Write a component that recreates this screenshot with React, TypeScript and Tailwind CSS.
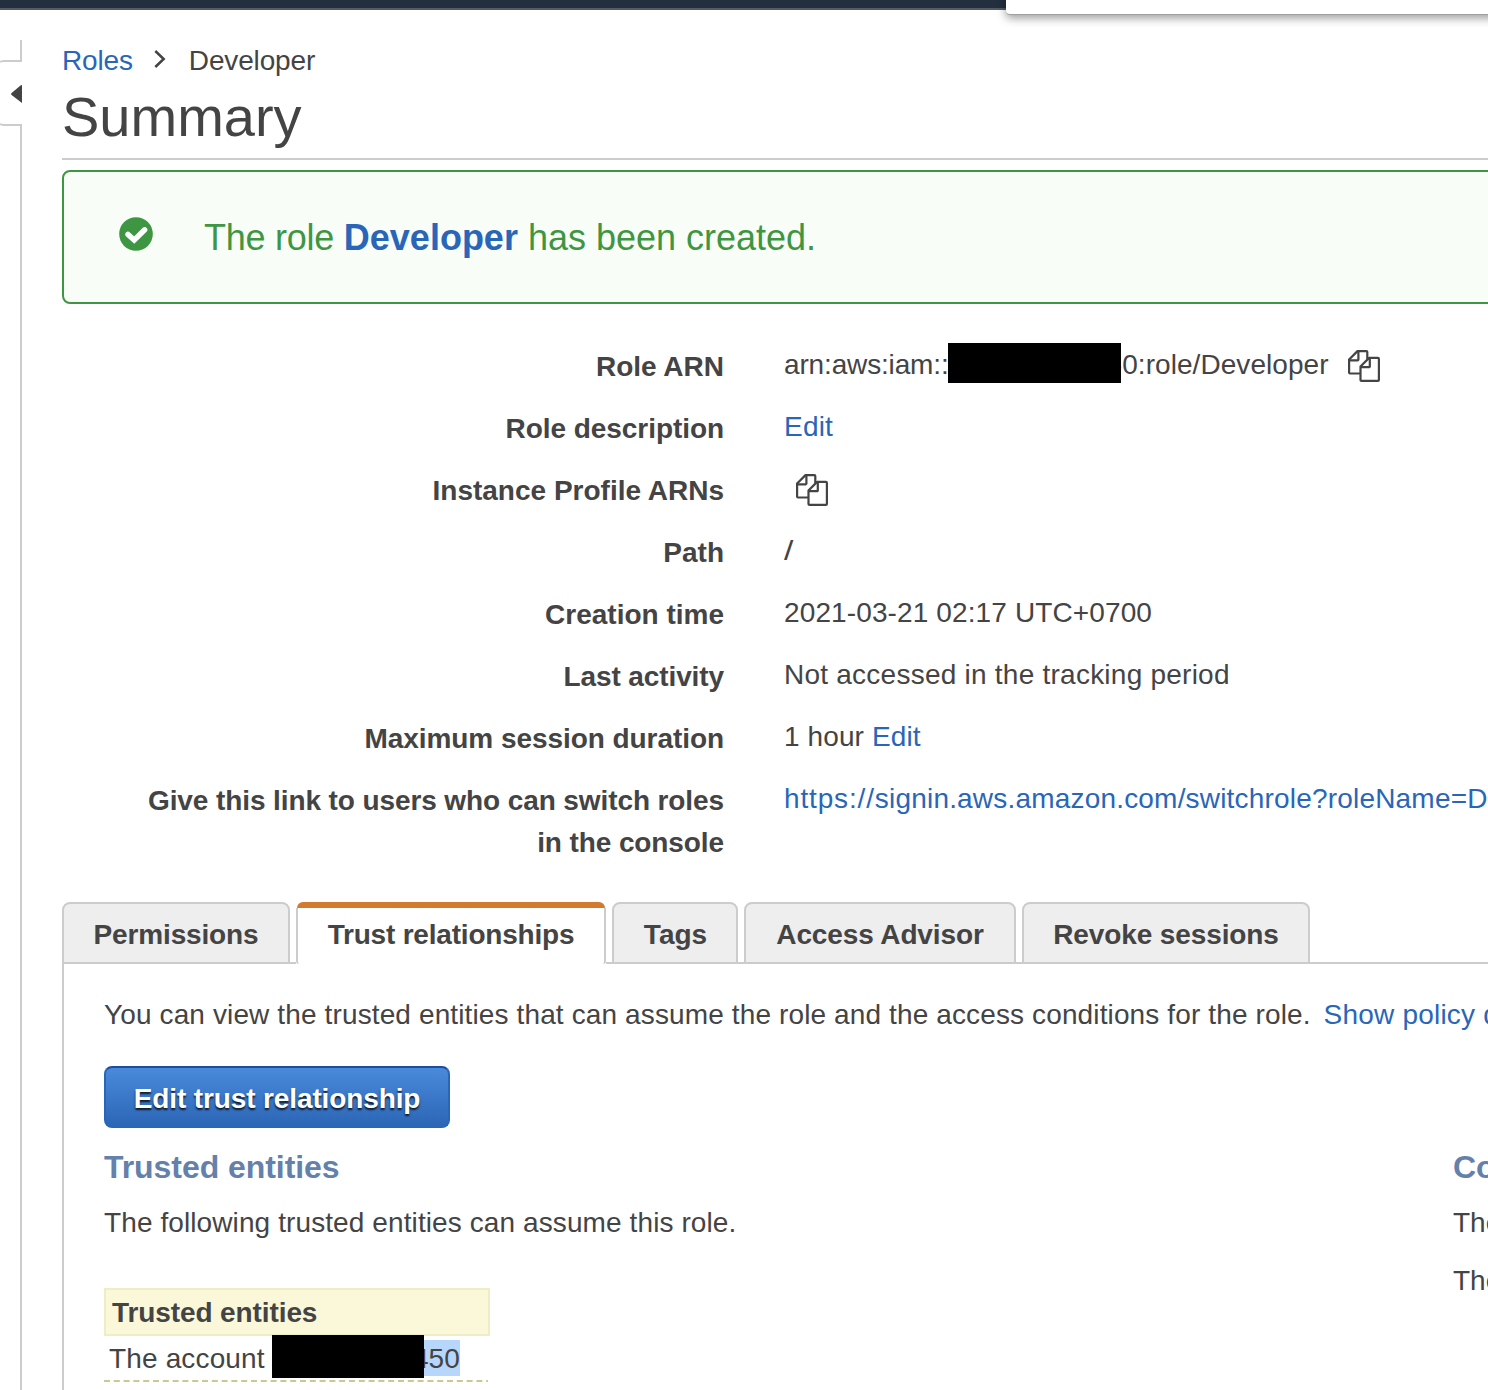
import type { ReactNode } from "react";

function CopyIcon({ className = "" }: { className?: string }) {
  return (
    <svg
      className={`h-8 w-8 shrink-0 ${className}`}
      viewBox="0 0 32 32"
      fill="none"
      stroke="#444"
      strokeWidth="2.2"
      strokeLinejoin="round"
    >
      <path d="M19.3 9V2.1a1 1 0 0 0-1-1H9.5L1.1 9.5v13.1c0 .5.4.9.9.9h10.4" />
      <path d="M10.4 1.1v8.4a.8.8 0 0 1-.8.8H1.1" />
      <path d="M21.1 7.9h8.8c.5 0 1 .4 1 1v21c0 .5-.4 1-1 1H13.5a1 1 0 0 1-1-1V16.5z" />
      <path d="M21.8 7.9v8.5a.8.8 0 0 1-.8.8h-8.5" />
    </svg>
  );
}

function Row({ label, className = "", children }: { label: ReactNode; className?: string; children: ReactNode }) {
  return (
    <div className="flex h-[62px] shrink-0 last:h-[85px]">
      <dt className={`w-[662px] shrink-0 pt-0.5 text-right font-bold ${className}`}>{label}</dt>
      <dd className="ml-[60px] flex h-[42px] items-center">{children}</dd>
    </div>
  );
}

function Tab({ className, children }: { className: string; children: ReactNode }) {
  return (
    <li
      className={`flex h-[62px] shrink-0 items-center justify-center rounded-t-lg border-2 border-[#ccc] bg-[#eee] pt-1 font-bold ${className}`}
    >
      {children}
    </li>
  );
}

export default function App() {
  return (
    <div className="relative flex h-[1390px] w-[1488px] flex-col overflow-hidden bg-white font-['Liberation_Sans',Arial,sans-serif] text-[28px] leading-[42px] whitespace-nowrap text-[#444]">
      <header className="h-[10px] shrink-0 border-b-2 border-[#545b64] bg-[#232f3e]" />
      <div className="absolute top-[-20px] left-[1006px] h-[35px] w-[520px] rounded-[4px] border-b border-[#a0a0a0] bg-white shadow-[0_3px_10px_0_rgba(0,0,0,0.4)]" />

      <div className="flex min-h-0 flex-1">
        <aside className="flex w-[22px] shrink-0 flex-col pt-[30px]">
          <div className="h-5 shrink-0 border-r-2 border-[#ccc]" />
          <div className="-ml-1 flex h-[66px] shrink-0 items-center justify-end rounded-l-lg border-y-2 border-[#ccc] pt-0.5">
            <svg className="h-[18px] w-[11px]" viewBox="0 0 11 18">
              <path d="M11 0v18L.6 10q-1-1 0-2L9.5.6Q10 0 11 0z" fill="#444" />
            </svg>
          </div>
          <div className="flex-1 border-r-2 border-[#ccc]" />
        </aside>

        <main className="ml-10 w-[1500px] shrink-0 pt-[30px]">
          <nav className="flex h-[42px] items-center tracking-[-0.15px]">
            <a className="text-[#2a66b8]">Roles</a>
            <svg className="mt-[-4px] ml-[21px] h-[18px] w-3" viewBox="0 0 12 18" fill="none" stroke="#444" strokeWidth="2.5">
              <path d="M1.3 1l8.4 8-8.4 8" />
            </svg>
            <span className="ml-[23px]">Developer</span>
          </nav>
          <h1 className="h-[78px] border-b-2 border-[#ccc] text-[56px] leading-[69px]">Summary</h1>

          <div className="mt-[10px] flex h-[134px] items-center rounded-lg border-2 border-[#3e9642] bg-[#f9fdf8] text-[36px] text-[#3e9642]">
            <svg className="-mt-1.5 ml-[55px] h-[34px] w-[34px]" viewBox="0 0 34 34">
              <circle cx="17" cy="17" r="16.8" fill="#3e9642" />
              <path
                d="M9 17.4l6.2 5.7L25.7 12.8"
                fill="none"
                stroke="#fff"
                strokeWidth="5.4"
                strokeLinecap="round"
                strokeLinejoin="miter"
              />
            </svg>
            <p className="ml-[51px] pt-0.5">
              <span className="tracking-[-0.25px]">The role </span>
              <b className="text-[#2a66b8]">Developer</b> has been created.
            </p>
          </div>

          <dl className="mt-10">
            <Row label="Role ARN">
              <span className="tracking-[-0.15px]">arn:aws:iam::</span>
              <span className="relative z-10 -mt-px -ml-px h-10 w-[173px] self-start bg-black" />
              <span className="-ml-[14px] tracking-[0.06px]">60:role/Developer</span>
              <CopyIcon className="mt-0.5 ml-[19px]" />
            </Row>
            <Row label="Role description" className="tracking-[-0.06px]">
              <a className="text-[#2a66b8] tracking-[0.2px]">Edit</a>
            </Row>
            <Row label="Instance Profile ARNs">
              <CopyIcon className="mt-0.5 ml-3" />
            </Row>
            <Row label="Path">
              <span className="inline-block origin-left scale-x-120">/</span>
            </Row>
            <Row label="Creation time">
              <span className="tracking-[0.12px]">2021-03-21 02:17 UTC+0700</span>
            </Row>
            <Row label="Last activity" className="tracking-[-0.1px]">
              <span className="tracking-[0.24px]">Not accessed in the tracking period</span>
            </Row>
            <Row label="Maximum session duration" className="tracking-[-0.06px]">
              <span className="tracking-[0.1px]">1 hour</span>
              <a className="ml-2 text-[#2a66b8] tracking-[0.1px]">Edit</a>
            </Row>
            <Row
              className="tracking-[-0.1px]"
              label={
                <>
                  Give this link to users who can switch roles
                  <br />
                  in the console
                </>
              }
            >
              <a className="text-[#2a66b8] tracking-[0.19px]">
                <span className="tracking-[0.85px]">https://</span>signin.aws.amazon.com/switchrole?roleName=Developer
              </a>
            </Row>
          </dl>

          <ul className="relative z-10 mt-[39px] flex gap-1.5">
            <Tab className="w-[228px] tracking-[-0.15px]">Permissions</Tab>
            <li className="flex h-[62px] w-[310px] shrink-0 flex-col rounded-t-lg bg-white font-bold tracking-[-0.2px]">
              <div className="mx-px h-1.5 shrink-0 rounded-t-md bg-[#d27b2e]" />
              <div className="flex flex-1 items-center justify-center rounded-b-[3px] border-x-2 border-[#ccc] bg-white pb-0.5">
                Trust relationships
              </div>
            </li>
            <Tab className="w-[126px] pl-px">Tags</Tab>
            <Tab className="w-[272px] tracking-[-0.12px]">Access Advisor</Tab>
            <Tab className="w-[288px] tracking-[-0.12px]">Revoke sessions</Tab>
          </ul>

          <section className="-mt-0.5 h-[440px] border-2 border-[#ccc] pt-[30px] pl-10">
            <p className="flex tracking-[0.125px]">
              <span>You can view the trusted entities that can assume the role and the access conditions for the role.</span>
              <a className="ml-[13px] tracking-[0.2px] text-[#2a66b8]">Show policy document</a>
            </p>
            <button className="mt-[30px] flex h-[62px] w-[346px] items-center justify-center rounded-lg border-2 border-[#2a66b8] border-t-[#1a4fa0] bg-linear-to-b from-[#4a8adb] to-[#2c66b6] pt-1 font-bold tracking-[-0.12px] text-white [text-shadow:0_2px_2px_rgba(0,0,0,0.8)]">
              Edit trust relationship
            </button>
            <div className="mt-[18px] flex">
              <div className="w-[1349px] shrink-0">
                <h2 className="text-[32px] font-bold tracking-[-0.06px] text-[#6481ab]">Trusted entities</h2>
                <p className="mt-[14px] tracking-[0.1px]">The following trusted entities can assume this role.</p>
                <div className="mt-11 w-[386px]">
                  <div className="h-12 border-2 border-[#eeedc8] bg-[#fbf7d9] pl-1.5 leading-[46px] font-bold tracking-[-0.1px]">
                    Trusted entities
                  </div>
                  <div className="flex h-[46px] pl-[5px] leading-[46px]">
                    <span className="w-[163px] tracking-[0.15px]">The account</span>
                    <span className="relative z-10 -mt-px h-[43px] w-[152px] bg-black" />
                    <span className="mt-1 -ml-[11px] h-9 bg-[#b7d6fb] leading-[38px]">450</span>
                  </div>
                  <svg className="-mt-0.5 block h-0.5 w-[384px]" viewBox="0 0 384 2">
                    <path d="M0 1h384" stroke="#cbc990" strokeWidth="2" strokeDasharray="6 3.8" />
                  </svg>
                </div>
              </div>
              <div>
                <h2 className="text-[32px] font-bold text-[#6481ab]">Conditions</h2>
                <p className="mt-[14px]">The following</p>
                <p className="mt-4">There are</p>
              </div>
            </div>
          </section>
        </main>
      </div>
    </div>
  );
}
